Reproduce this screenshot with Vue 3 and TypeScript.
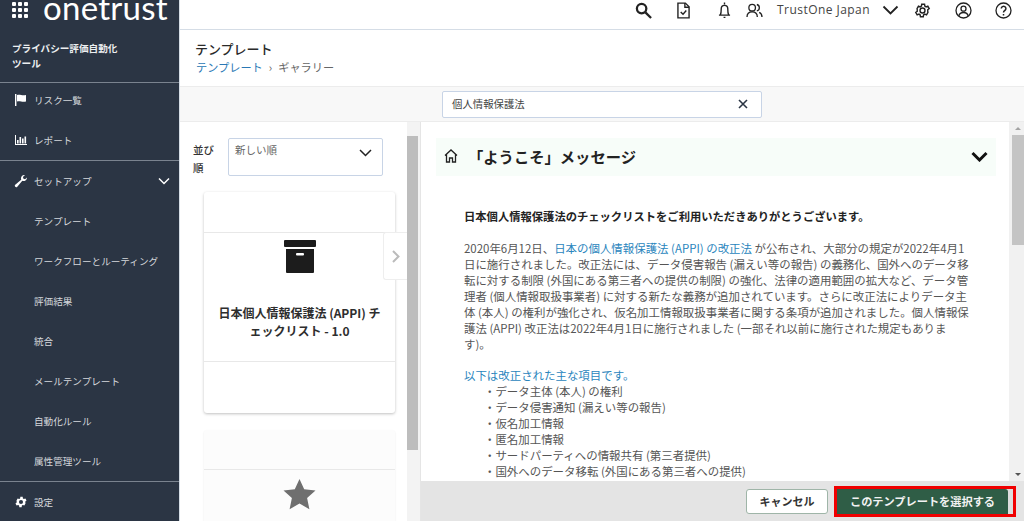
<script setup lang="ts">
const navTop = ['テンプレート', 'ワークフローとルーティング', '評価結果', '統合', 'メールテンプレート', '自動化ルール', '属性管理ツール']
const bullets = ['データ主体 (本人) の権利', 'データ侵害通知 (漏えい等の報告)', '仮名加工情報', '匿名加工情報', 'サードパーティへの情報共有 (第三者提供)', '国外へのデータ移転 (外国にある第三者への提供)']
const dots = [0, 1, 2]
</script>

<template>
  <div class="app">
    <aside class="side">
      <div class="brand">
        <svg class="grid" width="16" height="16" viewBox="0 0 16 16" fill="#fff">
          <template v-for="r in dots" :key="r">
            <rect v-for="c in dots" :key="c" :x="c * 6" :y="r * 6" width="4" height="4" rx="1" />
          </template>
        </svg>
        <span class="logo">onetrust</span>
      </div>
      <div class="product">プライバシー評価自動化<br />ツール</div>
      <div class="group sep">
        <div class="nav first">
          <svg class="ni" width="14" height="14" viewBox="0 0 14 14" fill="#fff"><rect x="1" y="1" width="1.4" height="12" /><path d="M3 2c3-1 5 1 9 0v6.500c-4 1-6-1-9 0z" /></svg>
          リスク一覧
        </div>
        <div class="nav">
          <svg class="ni" width="14" height="14" viewBox="0 0 14 14" fill="#fff"><path d="M1 2h1v9h11v1H1z" /><rect x="3" y="7" width="1.600" height="3.500" /><rect x="5.500" y="4" width="1.600" height="6.500" /><rect x="8" y="5.500" width="1.600" height="5" /><rect x="10.500" y="3.500" width="1.600" height="7" /></svg>
          レポート
        </div>
      </div>
      <div class="group sep">
        <div class="nav">
          <svg class="ni" width="14" height="14" viewBox="0 0 14 14" fill="#fff"><path d="M13 3.500a3.500 3.500 0 0 1-4.700 3.300L3.300 12.800a1.400 1.400 0 0 1-2.100-2l6-5A3.500 3.500 0 0 1 11 1L8.900 3l.6 1.700 1.600.5z" /></svg>
          セットアップ
          <svg class="caret" width="12" height="8" viewBox="0 0 12 8" fill="none" stroke="#fff" stroke-width="1.500"><path d="M1 1.500l5 5 5-5" /></svg>
        </div>
        <div v-for="n in navTop" :key="n" class="nav sub">{{ n }}</div>
      </div>
      <div class="nav foot">
        <svg class="ni" width="14" height="14" viewBox="0 0 24 24" fill="#fff"><path d="M19.400 13a7.600 7.600 0 0 0 0-2l2.100-1.600-2-3.500-2.500 1a7.500 7.500 0 0 0-1.700-1l-.4-2.700h-4l-.4 2.700a7.500 7.500 0 0 0-1.700 1l-2.500-1-2 3.500L4.600 11a7.600 7.600 0 0 0 0 2l-2.100 1.600 2 3.500 2.500-1a7.500 7.500 0 0 0 1.700 1l.4 2.700h4l.4-2.700a7.500 7.500 0 0 0 1.700-1l2.500 1 2-3.500zM12 15.500a3.500 3.500 0 1 1 0-7 3.500 3.500 0 0 1 0 7z" /></svg>
        設定
      </div>
    </aside>

    <div class="main">
      <header class="top">
        <svg width="17" height="17" viewBox="0 0 18 18" fill="none" stroke="#222" stroke-width="2.400" class="t1"><circle cx="7" cy="7" r="5" /><path d="M11 11l6 6" /></svg>
        <svg width="13" height="17" viewBox="0 0 14 18" fill="none" stroke="#222" stroke-width="1.500" class="t2"><path d="M1 1h8l4 4v12H1z" /><path d="M8.500 1v4.500H13" /><path d="M4 10.500l2.500 2.500L10 9" /></svg>
        <svg width="13" height="18" viewBox="0 0 14 18" fill="none" stroke="#222" stroke-width="1.500" class="t3"><path d="M1 14.500h12M2.500 14.500c1-2 1-4 1-7a3.500 3.500 0 0 1 7 0c0 3 0 5 1 7" /><path d="M7 1v2M6 17h2" /></svg>
        <svg width="17" height="15" viewBox="0 0 18 16" fill="none" stroke="#222" stroke-width="1.400" class="t4"><circle cx="6.500" cy="5" r="3.500" /><path d="M1 15c0-4 2.500-5.500 5.500-5.500S12 11 12 15M11.500 1.600a3.500 3.500 0 0 1 0 6.800M14 10c2 .8 3 2.500 3 5" /></svg>
        <span class="org">TrustOne Japan</span>
        <svg width="17" height="10" viewBox="0 0 16 10" fill="none" stroke="#222" stroke-width="1.800" class="t5"><path d="M1 1.500l7 7 7-7" /></svg>
        <svg width="17" height="17" viewBox="0 0 24 24" fill="none" stroke="#222" stroke-width="2" class="t6"><path d="M19.400 13a7.600 7.600 0 0 0 0-2l2.100-1.600-2-3.500-2.500 1a7.500 7.500 0 0 0-1.700-1l-.4-2.700h-4l-.4 2.700a7.500 7.500 0 0 0-1.700 1l-2.500-1-2 3.500L4.600 11a7.600 7.600 0 0 0 0 2l-2.100 1.600 2 3.500 2.500-1a7.500 7.500 0 0 0 1.700 1l.4 2.700h4l.4-2.700a7.500 7.500 0 0 0 1.700-1l2.500 1 2-3.500z" /><circle cx="12" cy="12" r="3.500" /></svg>
        <svg width="17" height="17" viewBox="0 0 17 17" fill="none" stroke="#222" stroke-width="1.300" class="t7"><circle cx="8.500" cy="8.500" r="7.500" /><circle cx="8.500" cy="6.700" r="2.500" /><path d="M3.800 14c.6-2.500 2.400-3.500 4.700-3.500s4.100 1 4.700 3.500" /></svg>
        <svg width="17" height="17" viewBox="0 0 17 17" fill="none" stroke="#222" stroke-width="1.300" class="t8"><circle cx="8.500" cy="8.500" r="7.500" /><path d="M6.300 6.500a2.300 2.300 0 1 1 3.500 2c-1 .6-1.300 1-1.300 2" stroke-width="1.500" /><path d="M8.500 12v1.500" stroke-width="1.500" /></svg>
      </header>

      <section class="head">
        <h1>テンプレート</h1>
        <div class="crumb"><a>テンプレート</a><span class="gt">›</span><span class="cur">ギャラリー</span></div>
      </section>

      <section class="searchbar">
        <div class="search">
          <span>個人情報保護法</span>
          <svg width="10" height="10" viewBox="0 0 10 10" fill="none" stroke="#2b3544" stroke-width="1.600"><path d="M1 1l8 8M9 1L1 9" /></svg>
        </div>
      </section>

      <div class="body">
        <div class="gallery">
          <div class="gal-inner">
            <div class="sort">
              <label>並び<br />順</label>
              <div class="select">
                <span>新しい順</span>
                <svg width="13" height="8" viewBox="0 0 13 8" fill="none" stroke="#222" stroke-width="1.500"><path d="M1 1l5.500 5.500L12 1" /></svg>
              </div>
            </div>
            <div class="card">
              <div class="c-top"></div>
              <div class="c-mid">
                <svg width="32" height="33" viewBox="0 0 32 33" fill="#1c1c1c"><rect width="32" height="7" rx="1" /><path d="M2 9h28v23a1 1 0 0 1-1 1H3a1 1 0 0 1-1-1z" /><rect x="12" y="13" width="8" height="2.500" rx="1" fill="#fff" /></svg>
                <p>日本個人情報保護法 (APPI) チ<br />ェックリスト - 1.0</p>
              </div>
              <div class="c-bot"></div>
            </div>
            <div class="card faded">
              <div class="c-top"></div>
              <div class="c-mid">
                <svg width="33" height="33" viewBox="0 0 33 33" fill="#6f6f6f"><path d="M16.500 1l4.700 10.300 11.300 1.200-8.400 7.600 2.300 11.100-9.900-5.600-9.900 5.600 2.300-11.100L.5 12.500l11.300-1.200z" /></svg>
              </div>
            </div>
          </div>
          <div class="tab">
            <svg width="8" height="13" viewBox="0 0 8 13" fill="none" stroke="#bbb" stroke-width="2"><path d="M1 1l5.500 5.500L1 12" /></svg>
          </div>
          <div class="sb left"><div class="thumb"></div></div>
        </div>

        <div class="detail">
          <div class="detail-main">
            <div class="scroll">
              <div class="acc">
                <svg width="14" height="14" viewBox="0 0 14 14" fill="none" stroke="#222" stroke-width="1.300"><path d="M1 6.500L7 1l6 5.500M2.500 5.500V13h3V9h3v4h3V5.500" /></svg>
                <strong>「ようこそ」メッセージ</strong>
                <svg class="acc-c" width="17" height="11" viewBox="0 0 17 11" fill="none" stroke="#111" stroke-width="3"><path d="M1.500 2l7 7 7-7" /></svg>
              </div>
              <div class="text">
                <p class="lead">日本個人情報保護法のチェックリストをご利用いただきありがとうございます。</p>
                <p class="para">2020年6月12日、<a>日本の個人情報保護法 (APPI) の改正法</a> が公布され、大部分の規定が2022年4月1<br />日に施行されました。改正法には、データ侵害報告 (漏えい等の報告) の義務化、国外へのデータ移<br />転に対する制限 (外国にある第三者への提供の制限) の強化、法律の適用範囲の拡大など、データ管<br />理者 (個人情報取扱事業者) に対する新たな義務が追加されています。さらに改正法によりデータ主<br />体 (本人) の権利が強化され、仮名加工情報取扱事業者に関する条項が追加されました。個人情報保<br />護法 (APPI) 改正法は2022年4月1日に施行されました (一部それ以前に施行された規定もありま<br />す)。</p>
                <p class="blue">以下は改正された主な項目です。</p>
                <ul>
                  <li v-for="b in bullets" :key="b">・{{ b }}</li>
                </ul>
              </div>
            </div>
            <div class="sb right">
              <i class="arrow up"></i>
              <div class="thumb t-r"></div>
              <i class="arrow down"></i>
            </div>
          </div>
          <footer class="foot-bar">
            <button class="cancel">キャンセル</button>
            <div class="mark"><button class="ok">このテンプレートを選択する</button></div>
          </footer>
        </div>
      </div>
    </div>
  </div>
</template>

<style>
html, body { margin: 0; padding: 0; overflow: hidden; background: #fff; }
</style>

<style scoped>
.app { width: 1024px; height: 521px; display: flex; overflow: hidden; font-family: "Noto Sans CJK JP", "Noto Sans", sans-serif; color: #333; }
.side { width: 179px; flex: none; background: #2b3544; color: #d5d8dc; font-size: 9.6px; display: flex; flex-direction: column; border-right: 1px solid #d5dde6; }
.brand { height: 29px; flex: none; display: flex; align-items: flex-start; padding-left: 12px; }
.grid { margin-top: 2px; flex: none; }
.logo { font-family: Lato, sans-serif; color: #fff; font-size: 33px; line-height: 14px; margin-left: 15px; letter-spacing: .25px; }
.product { height: 53px; flex: none; box-sizing: border-box; padding: 12px 12px 0; color: #eceef0; font-size: 9.6px; font-weight: 700; line-height: 15px; }
.group { border-top: 1px solid #7a838f; flex: none; }
.nav { height: 40px; flex: none; box-sizing: border-box; display: flex; align-items: center; padding-left: 14px; position: relative; }
.first { height: 37px; padding-bottom: 3px; }
.ni { margin-right: 6px; flex: none; }
.sub { padding-left: 34px; }
.caret { margin-left: auto; margin-right: 9px; }
.foot { border-top: 1px solid #7a838f; }

.main { flex: 1; min-width: 0; display: flex; flex-direction: column; }
.top { height: 29px; flex: none; box-sizing: content-box; display: flex; align-items: flex-start; border-bottom: 1px solid #d5dde6; justify-content: flex-end; }
.top svg { flex: none; margin-top: 2px; }
.t1 { margin-right: 25px; }
.t2 { margin-right: 28px; }
.t3 { margin-right: 15px; margin-top: 1px !important; }
.t4 { margin-right: 14px; margin-top: 3px !important; }
.org { font-family: "Open Sans", sans-serif; font-size: 12px; line-height: 20px; color: #444; margin-right: 12px; letter-spacing: .45px; white-space: nowrap; }
.t5 { margin-right: 15px; margin-top: 5px !important; }
.t6 { margin-right: 24px; }
.t7 { margin-right: 23px; }
.t8 { margin-right: 12px; }
.head { height: 57px; box-sizing: border-box; padding: 10px 0 0 15px; flex: none; border-bottom: 1px solid #ececec; }
h1 { margin: 0; font-size: 13px; font-weight: 500; line-height: 17px; color: #2a2a2a; }
.crumb { font-size: 11.2px; line-height: 20px; display: flex; align-items: center; padding-left: 1px; }
.crumb a { color: #2a78b5; }
.gt { margin: 0 6px; color: #666; }
.cur { color: #666; }
.searchbar { height: 35px; flex: none; background: #f8f8f8; display: flex; align-items: center; justify-content: center; border-bottom: 1px solid #ececec; box-sizing: border-box; }
.search { width: 320px; height: 27px; box-sizing: border-box; background: #fff; border: 1px solid #c8d4e6; border-radius: 2px; display: flex; align-items: center; justify-content: space-between; padding: 0 13px 0 9px; font-size: 10.4px; color: #444; }
.search span { margin-top: -2px; }
.body { flex: 1; min-height: 0; display: flex; }
.gallery { width: 240px; flex: none; position: relative; display: flex; overflow: hidden; }
.gal-inner { width: 227px; flex: none; }
.sort { display: flex; padding: 16px 0 0 13px; height: 54px; box-sizing: content-box; }
.sort label { width: 35px; font-size: 10.5px; font-weight: 500; line-height: 18px; padding-top: 3px; color: #333; }
.select { width: 155px; height: 38px; box-sizing: border-box; border: 1px solid #c8d4e6; border-radius: 2px; display: flex; justify-content: space-between; padding: 3px 10px 0 6px; font-size: 10.5px; color: #666; }
.select svg { margin-top: 7px; }
.card { width: 191px; margin-left: 24px; background: #fff; border-radius: 3px; box-shadow: 0 1px 3px rgba(0,0,0,.25); margin-bottom: 17px; box-sizing: border-box; }
.faded { box-shadow: 0 1px 2px rgba(0,0,0,.1); background: #fcfcfc; }
.c-top { height: 40px; border-bottom: 1px solid #e8e8e8; }
.faded .c-top { height: 39px; }
.c-mid { height: 128px; box-sizing: border-box; padding-top: 7px; text-align: center; }
.faded .c-mid { padding-top: 8px; }
.c-mid p { margin: 26px 0 0; font-size: 12px; font-weight: 700; line-height: 18px; color: #2e2e2e; white-space: nowrap; }
.c-bot { height: 51px; border-top: 1px solid #e8e8e8; }
.tab { position: absolute; left: 203px; top: 110px; width: 24px; height: 48px; background: #fff; border: 1px solid #eee; border-right: 0; border-radius: 3px 0 0 3px; box-sizing: border-box; display: flex; align-items: center; justify-content: center; }
.sb { flex: none; box-sizing: border-box; padding-top: 14px; }
.sb.left { width: 13px; background: #f3f3f3; padding-right: 2px; }
.sb.right { width: 15px; background: #f1f1f1; padding: 13px 0 0 3px; position: relative; }
.thumb { height: 314px; background: #bdbdbd; }
.t-r { height: 110px; background: #c4c4c4; }
.arrow { position: absolute; left: 6px; width: 0; height: 0; border-left: 3px solid transparent; border-right: 3px solid transparent; }
.up { top: 5px; border-bottom: 3px solid #a3a3a3; }
.down { bottom: 5px; border-top: 3px solid #555; }
.detail { flex: 1; min-width: 0; display: flex; flex-direction: column; border-left: 1px solid #e5e5e5; }
.detail-main { flex: 1; min-height: 0; display: flex; }
.scroll { flex: 1; min-width: 0; overflow: hidden; padding: 16px 13px 0 15px; }
.acc { height: 38px; box-sizing: border-box; padding: 0 0 2px 8px; background: #f7fdf9; display: flex; align-items: center; }
.acc strong { font-size: 15.3px; font-weight: 700; color: #222; margin-left: 10px; }
.acc-c { margin-left: auto; margin-right: 8px; }
.text { padding: 32px 0 0 28px; font-size: 11.45px; line-height: 16px; white-space: nowrap; color: #555; }
.text p { margin: 0; }
.lead { font-size: 11.3px; font-weight: 700; color: #222; margin-bottom: 16px !important; }
.para { margin-bottom: 15px !important; }
.para a, .blue { color: #2a85bd; }
ul { list-style: none; margin: 0; padding: 0 0 0 20px; }
.foot-bar { height: 40px; flex: none; background: #e4e4e4; display: flex; align-items: center; justify-content: flex-end; padding-right: 8px; }
button { font-family: inherit; cursor: pointer; }
.cancel { width: 82px; height: 25px; background: #fff; border: 1px solid #9fb5a8; border-radius: 3px; font-size: 11px; font-weight: 700; color: #333; margin-right: 6px; padding: 0; }
.mark { border: 3px solid #f00000; height: 31px; width: 182px; box-sizing: border-box; padding: 0; background: #ddd; display: flex; }
.ok { width: 171px; height: 25px; border: 0; background: #2f5d46; color: #f2f2f2; font-size: 11.2px; font-weight: 700; padding: 0; border-radius: 0 3px 0 0; }
</style>
